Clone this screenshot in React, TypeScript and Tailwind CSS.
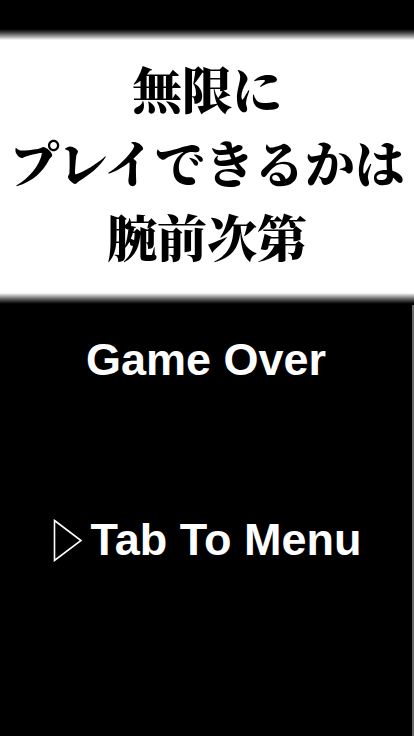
const serif = {
  fontFamily: '"Noto Serif CJK JP", "Noto Serif CJK SC", "Noto Sans CJK JP", serif',
}

const titleLines = ["無限に", "プレイできるかは", "腕前次第"]

function PlayArrow() {
  return (
    <svg width="30" height="43" viewBox="0 0 30 43" className="shrink-0">
      <path d="M1.5 1.5 L28 21.5 L1.5 41.5 Z" fill="none" stroke="white" strokeWidth="1.6" strokeLinejoin="miter" />
    </svg>
  )
}

export default function App() {
  return (
    <div className="flex h-[736px] w-[414px] flex-col overflow-hidden bg-black">
      <div className="h-[28px] bg-black" />
      <div className="h-[12px] bg-gradient-to-b from-black to-white" />
      <div className="flex h-[253px] flex-col items-center bg-white pt-[10px]" style={serif}>
        {titleLines.map((line) => (
          <p key={line} className="text-[50px] font-black leading-[74px] text-black">
            {line}
          </p>
        ))}
      </div>
      <div className="h-[12px] bg-gradient-to-b from-white to-black" />
      <div className="flex flex-1 flex-col items-center border-r-2 border-[#6b6b6b] font-['Liberation_Sans',Arial,sans-serif] text-white">
        <p className="mt-[25px] text-[45px] font-bold leading-[60px]">Game Over</p>
        <div className="mt-[120px] flex items-center gap-[8px] pl-[2px]">
          <PlayArrow />
          <span className="text-[45px] font-bold leading-[60px]">Tab To Menu</span>
        </div>
      </div>
    </div>
  )
}
